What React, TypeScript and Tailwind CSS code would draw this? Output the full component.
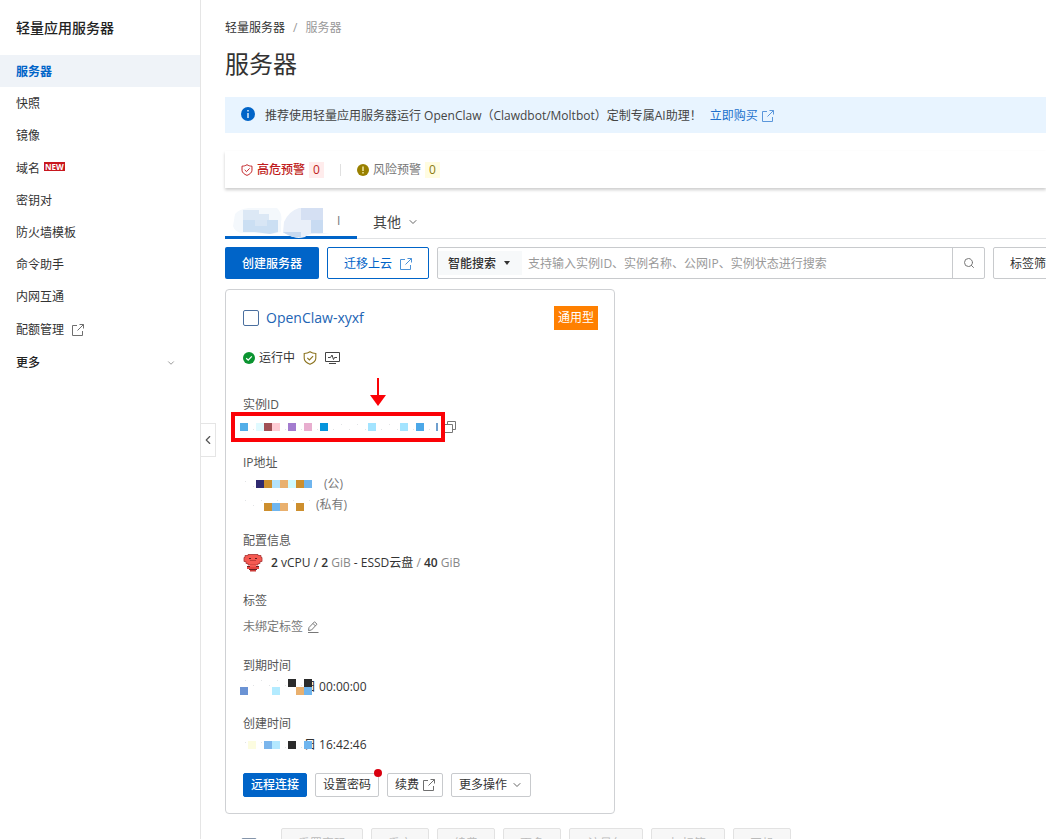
import type { ButtonHTMLAttributes, ReactNode } from "react"
import { ChevronDown, ChevronLeft, Search } from "lucide-react"

type Cell = { x: number; y?: number; w?: number; color: string }

const menu = ["快照", "镜像", "域名", "密钥对", "防火墙模板", "命令助手", "内网互通"]

const batchActions = ["重置密码", "重启", "续费", "更多", "流量包", "加标签", "开机"]

const idCells: Cell[] = [
  { x: 0, color: "#52aee8" },
  { x: 2, color: "#e0faff" },
  { x: 3, color: "#a05055" },
  { x: 4, color: "#ffccd4" },
  { x: 6, color: "#a37ccf" },
  { x: 8, color: "#e8aecf" },
  { x: 10, color: "#0695dc" },
  { x: 16, color: "#a3e4ff" },
  { x: 20, color: "#a3e4ff" },
  { x: 22, color: "#4ca8e8" },
  { x: 24.5, w: 2, color: "#6f9fce" },
]

const publicIpCells: Cell[] = [
  { x: 2, color: "#2f2a70" },
  { x: 3, color: "#cd8f2e" },
  { x: 4, color: "#b3e2fc" },
  { x: 5, color: "#e9b06e" },
  { x: 6, color: "#cffafe" },
  { x: 7, color: "#cd8f2e" },
  { x: 8, color: "#6fb5ee" },
]

const privateIpCells: Cell[] = [
  { x: 3, y: 0.5, color: "#cd8f2e" },
  { x: 4, y: 0.5, color: "#6fb5ee" },
  { x: 5, y: 0.5, color: "#e9b06e" },
  { x: 7, y: 0.5, color: "#cd8f2e" },
]

const expireCells: Cell[] = [
  { x: 6, color: "#2b2b2b" },
  { x: 8, color: "#2b2b2b" },
  { x: 0, y: 1, color: "#6b93d4" },
  { x: 4, y: 1, color: "#b3ebff" },
  { x: 7, y: 1, color: "#e9b06e" },
  { x: 8, y: 1, color: "#6fb5ee" },
]

const createCells: Cell[] = [
  { x: 1, color: "#fcfce0" },
  { x: 3, color: "#7ab5ec" },
  { x: 4, color: "#b3e8ff" },
  { x: 6, color: "#2b2b2b" },
  { x: 8, color: "#6fb5ee" },
]

// Masked value, drawn as a row of 8px blocks
function Mosaic({ cells, cols, rows = 1 }: { cells: Cell[]; cols: number; rows?: number }) {
  return (
    <svg width={cols * 8} height={rows * 8} className="relative -ml-[3px] shrink-0" aria-hidden="true">
      {Array.from({ length: cols }, (_, i) => (
        <rect key={i} x={i * 8 + 5} y={(i % 2) * 5 + 1} width="1" height="1" fill="#e2e4e6" />
      ))}
      {cells.map((c) => (
        <rect key={`${c.x}-${c.y ?? 0}`} x={c.x * 8} y={(c.y ?? 0) * 8} width={c.w ?? 8} height="8" fill={c.color} />
      ))}
    </svg>
  )
}

function ExternalIcon() {
  return (
    <svg width="12" height="12" viewBox="0 0 12 12" fill="none" stroke="currentColor" className="shrink-0 opacity-70">
      <path d="M5 1.5H.5v10h10V7M7.500.5h4v4M11.500.5l-6 6" />
    </svg>
  )
}

function ShieldIcon({ size }: { size: number }) {
  return (
    <svg width={size} height={size} viewBox="0 0 14 14" fill="none" stroke="currentColor" strokeWidth="1.1" className="shrink-0">
      <path d="M7 .8C5.300 2 3.400 2.500 1.200 2.500v4.800c0 2.700 2.600 4.700 5.800 6 3.200-1.300 5.800-3.300 5.800-6V2.500C10.600 2.500 8.700 2 7 .8Z" />
      <path d="m4.300 6.800 2.100 2.100 3.700-3.800" />
    </svg>
  )
}

function InfoIcon() {
  return (
    <svg width="14" height="14" viewBox="0 0 14 14" className="mb-1 shrink-0">
      <circle cx="7" cy="7" r="7" fill="#0064c8" />
      <path d="M7 6v5M7 3v1.500" stroke="#fff" strokeWidth="1.300" />
    </svg>
  )
}

function WarnIcon() {
  return (
    <svg width="12" height="12" viewBox="0 0 12 12" className="shrink-0">
      <circle cx="6" cy="6" r="6" fill="#998000" />
      <path d="M6 2.500v4.500M6 8v1.500" stroke="#fff8c0" strokeWidth="1.300" />
    </svg>
  )
}

function RunningIcon() {
  return (
    <svg width="12" height="12" viewBox="0 0 12 12" className="shrink-0">
      <circle cx="6" cy="6" r="6" fill="#0a9430" />
      <path d="m3.200 6.200 2 1.900 3.600-3.800" fill="none" stroke="#fff" strokeWidth="1.200" />
    </svg>
  )
}

function MonitorIcon() {
  return (
    <svg width="15" height="12" viewBox="0 0 15 12" fill="none" stroke="#444" className="shrink-0">
      <path d="M.5.5h14v9H.5zM4 11.500h7" />
      <path d="M3 5.500h2.500L7 3l1.500 4.500 1-2H12" />
    </svg>
  )
}

function CopyIcon() {
  return (
    <svg width="12" height="12" viewBox="0 0 12 12" fill="none" stroke="#777">
      <path d="M.5 3.500h8v8h-8zM3.500 3.500v-3h8v8h-3" />
    </svg>
  )
}

function EditIcon() {
  return (
    <svg width="12" height="12" viewBox="0 0 12 12" fill="none" stroke="#777">
      <path d="M1.500 9.500 2 6.500 7.500.8 10 3.200 4.500 9zM6 2.500l2.400 2.400M1 11.500h10.500" />
    </svg>
  )
}

function LobsterIcon() {
  return (
    <svg width="20" height="18" viewBox="0 0 20 18" className="shrink-0">
      <path d="M5 .5h10v1h3v2h1v4h-2v2h-2v1.500H5V9.500H3v-2H1v-4h1v-2h3z" fill="#f55a52" stroke="#a83432" strokeWidth="0.8" />
      <path d="M6 4h2v1H6zM12 4h2v1h-2z" fill="#5e1c1e" />
      <path d="M7 6.500h6" stroke="#c23c39" />
      <path d="M7 11h6v2H7z" fill="#f55a52" />
      <path d="M4 13h12v2H4z" fill="#e5443f" />
      <path d="M4 12.500h3M13 12.500h3" stroke="#6d2022" />
      <path d="M6 15.500h8" stroke="#6d2022" />
      <path d="M7 16h6v1.500H7z" fill="#c93a37" />
    </svg>
  )
}

function TabMosaic() {
  return (
    <svg width="98" height="30" viewBox="0 0 98 30" className="mt-1 shrink-0">
      <path d="M2 6Q6 1 16 0H44Q50 6 48 14V24L40 26 14 25Q2 26 0 18Z" fill="#f4f8fc" />
      <path d="M51 14Q56 3 66 0H90V25H97L86 26Q76 25 72 29Q62 32 56 26L50 25Z" fill="#e9eff9" />
      <path d="M10 2h16v10H10zM26 6h10v6H26z" fill="#dce8f5" />
      <path d="M10 12h35v12l-8 2-15-2H10z" fill="#cbdff3" />
      <path d="M22 12h12v6H22z" fill="#d8e6f5" />
      <path d="M68 0h22v12H68z" fill="#d5e0f3" />
      <path d="M78 12h12v13H78z" fill="#c8dbf2" />
      <path d="M50 24h18v5h-9l-6-3z" fill="#c8d9ef" />
    </svg>
  )
}

function SmallButton({ children, className = "", ...rest }: ButtonHTMLAttributes<HTMLButtonElement>) {
  return (
    <button
      type="button"
      className={`flex h-6 items-center gap-1 whitespace-nowrap rounded-xs border px-[7px] ${className}`}
      {...rest}
    >
      {children}
    </button>
  )
}

function Field({ label, className = "", children }: { label: string; className?: string; children: ReactNode }) {
  return (
    <div className={className}>
      <dt className="h-5 leading-5 text-[#555]">{label}</dt>
      {children}
    </div>
  )
}

function Sidebar() {
  return (
    <aside className="relative w-[201px] shrink-0 border-r border-[#e5e5e5] text-[#333]">
      <h2 className="flex h-[55px] items-center px-4 text-sm font-medium text-[#222]">轻量应用服务器</h2>
      <nav className="flex flex-col">
        <a href="#servers" className="flex h-8 items-center bg-[#eff3f8] px-4 pt-0.5 font-bold text-[#0064c8]">
          服务器
        </a>
        {menu.map((item) => (
          <a
            key={item}
            href={`#${item}`}
            className={`flex items-center gap-1 px-4 pt-0.5 ${item === "域名" ? "h-[33px]" : "h-8"}`}
          >
            {item}
            {item === "域名" && (
              <span className="mb-1 bg-[#c8171e] px-px text-[8px] leading-[9px] font-bold text-white">NEW</span>
            )}
          </a>
        ))}
        <a href="#quota" className="flex h-[33px] items-center gap-2 px-4 pt-0.5">
          配额管理
          <ExternalIcon />
        </a>
        <button type="button" className="mt-0.5 flex h-8 items-center justify-between pr-6 pl-4 font-medium text-[#222]">
          更多
          <ChevronDown className="size-2.5 text-[#888]" />
        </button>
      </nav>
      <button
        type="button"
        aria-label="收起"
        className="absolute top-[423px] left-[200px] z-10 flex h-[34px] w-4 items-center justify-center border border-[#e5e5e5] bg-white text-[#555]"
      >
        <ChevronLeft className="size-3.5 shrink-0" />
      </button>
    </aside>
  )
}

function AlertBar() {
  return (
    <div className="mt-[18px] flex h-[37px] items-center bg-white px-4 shadow-[0_2px_3px_rgba(0,0,0,0.2)]">
      <span className="flex items-center gap-1 text-[#c01c20]">
        <ShieldIcon size={12} />
        <span className="font-medium">高危预警</span>
        <span className="bg-[#ffecec] px-1 leading-4">0</span>
      </span>
      <span className="mx-4 h-3 w-px bg-[#e0e0e0]" />
      <span className="flex items-center gap-1 text-[#777]">
        <WarnIcon />
        <span>风险预警</span>
        <span className="bg-[#fffce0] px-1 leading-4 text-[#8a7a10]">0</span>
      </span>
    </div>
  )
}

function Toolbar() {
  return (
    <div className="mt-2 flex gap-2">
      <button type="button" className="h-8 shrink-0 rounded-xs bg-[#0064c8] px-[17px] pt-0.5 font-medium text-white">
        创建服务器
      </button>
      <button
        type="button"
        className="flex h-8 shrink-0 items-center gap-2 rounded-xs border border-[#0064c8] px-4 pt-0.5 text-[#0064c8]"
      >
        迁移上云
        <ExternalIcon />
      </button>
      <form className="flex h-8 w-[548px] shrink-0 items-center rounded-xs border border-[#c8cacd]">
        <div className="relative flex h-6 w-[84px] items-center bg-[#f7f9fa]">
          <select aria-label="搜索方式" className="w-full appearance-none pt-0.5 pl-2.5 font-medium text-[#333] outline-none">
            <option>智能搜索</option>
          </select>
          <span className="pointer-events-none absolute right-3 border-x-[3px] border-t-4 border-x-transparent border-t-[#333]" />
        </div>
        <input
          type="text"
          aria-label="搜索"
          placeholder="支持输入实例ID、实例名称、公网IP、实例状态进行搜索"
          className="min-w-0 flex-1 px-1.5 pt-0.5 outline-none placeholder:text-[#999]"
        />
        <button
          type="button"
          aria-label="搜索"
          className="flex h-full w-8 items-center justify-center border-l border-[#c8cacd] text-[#777]"
        >
          <Search className="size-3" />
        </button>
      </form>
      <button type="button" className="h-8 shrink-0 rounded-xs border border-[#c8cacd] px-4 pt-0.5 text-[#333]">
        标签筛选
      </button>
    </div>
  )
}

function ServerCard() {
  return (
    <article className="relative mt-2.5 w-[390px] rounded-sm border border-[#cfd1d4] px-[17px] pt-4 pb-4 text-[#333]">
      <div className="flex h-6 items-center">
        <input
          type="checkbox"
          id="server"
          className="size-4 appearance-none rounded-xs border border-[#4a6f9f] bg-white checked:bg-[#0064c8]"
        />
        <label htmlFor="server" className="ml-[7px] text-sm font-medium text-[#2264b4]">
          OpenClaw-xyxf
        </label>
        <span className="-mr-px ml-auto bg-[#ff8000] px-1 leading-6 text-white">通用型</span>
      </div>

      <div className="mt-[18px] flex h-5 items-center">
        <RunningIcon />
        <span className="mr-2 ml-1">运行中</span>
        <span className="mr-2 text-[#8c7420]">
          <ShieldIcon size={14} />
        </span>
        <MonitorIcon />
      </div>

      <dl className="mt-[27px]">
        <Field label="实例ID">
          <dd className="mt-0.5 flex h-5 items-center gap-1">
            <Mosaic cells={idCells} cols={25} />
            <CopyIcon />
          </dd>
        </Field>
        <Field label="IP地址" className="mt-4">
          <dd className="flex h-[21px] items-center gap-3 text-[#777]">
            <Mosaic cells={publicIpCells} cols={9} />
            (公)
          </dd>
          <dd className="flex h-[21px] items-center gap-1 text-[#777]">
            <Mosaic cells={privateIpCells} cols={9} rows={1.5} />
            (私有)
          </dd>
        </Field>
        <Field label="配置信息" className="mt-4">
          <dd className="mt-0.5 flex h-5 items-center gap-2 whitespace-pre">
            <LobsterIcon />
            <span>
              <b className="font-semibold">2</b> vCPU / <b className="font-semibold">2</b>{" "}
              <span className="text-[#888]">GiB</span> - ESSD云盘 <span className="text-[#888]">/</span>{" "}
              <b className="font-semibold">40</b> <span className="text-[#888]">GiB</span>
            </span>
          </dd>
        </Field>
        <Field label="标签" className="mt-[18px]">
          <dd className="mt-1.5 flex h-5 items-center gap-1 text-[#777]">
            未绑定标签
            <EditIcon />
          </dd>
        </Field>
        <Field label="到期时间" className="mt-[19px]">
          <dd className="mt-px flex h-5 items-center">
            <Mosaic cells={expireCells} cols={9} rows={2} />
            <span className="-ml-2">日 00:00:00</span>
          </dd>
        </Field>
        <Field label="创建时间" className="mt-[17px]">
          <dd className="mt-px flex h-5 items-center">
            <Mosaic cells={createCells} cols={9} />
            <span className="-ml-2">日 16:42:46</span>
          </dd>
        </Field>
      </dl>

      <div className="mt-[18px] flex gap-2">
        <SmallButton className="border-[#0064c8] bg-[#0064c8] font-medium text-white">远程连接</SmallButton>
        <SmallButton className="relative border-[#c8cacd]">
          设置密码
          <span className="absolute -top-[5px] -right-1 size-2 rounded-full bg-[#d9000f]" />
        </SmallButton>
        <SmallButton className="border-[#c8cacd]">
          续费
          <ExternalIcon />
        </SmallButton>
        <SmallButton className="border-[#c8cacd]">
          更多操作
          <ChevronDown className="size-3 text-[#666]" />
        </SmallButton>
      </div>

      {/* highlight around the instance id */}
      <div className="absolute top-[122px] left-[5px] h-[30px] w-[214px] border-4 border-[#fb0207]" />
      <svg width="16" height="28" viewBox="0 0 16 28" className="absolute top-[88px] left-36">
        <path d="M8 0v18" stroke="#fb0207" strokeWidth="2" />
        <path d="M0 17h16L8 28z" fill="#fb0207" />
      </svg>
    </article>
  )
}

export default function App() {
  return (
    <div className="flex h-screen overflow-hidden bg-white font-['Open_Sans','Noto_Sans_CJK_SC',sans-serif] text-xs">
      <Sidebar />
      <main className="min-w-0 flex-1 overflow-hidden pl-6">
        <div className="mt-[18px] flex h-5 items-center gap-2">
          <a href="#home" className="text-[#333]">
            轻量服务器
          </a>
          <span className="text-[#999]">/</span>
          <span className="text-[#999]">服务器</span>
        </div>
        <h1 className="mt-2.5 text-2xl leading-8 text-[#333]">服务器</h1>

        <div className="mt-[17px] flex h-9 items-center bg-[#e8f4ff] px-4 pt-0.5 text-[#444]">
          <InfoIcon />
          <p className="ml-2.5 whitespace-nowrap">
            推荐使用轻量应用服务器运行 OpenClaw（Clawdbot/Moltbot）定制专属AI助理！
          </p>
          <a href="#buy" className="ml-2 flex items-center gap-1 whitespace-nowrap text-[#2070cc]">
            立即购买
            <ExternalIcon />
          </a>
        </div>

        <AlertBar />

        <div className="mt-[17px] flex h-[34px] border-b border-[#e0e2e4] text-sm text-[#444]">
          <button
            type="button"
            className="-mb-px flex w-[132px] items-center gap-1.5 border-b-3 border-[#0064c8] pl-2 text-[#777]"
          >
            <TabMosaic />
            <span className="text-xs">I</span>
          </button>
          <button type="button" className="flex items-center gap-1.5 px-4">
            其他
            <ChevronDown className="size-3 text-[#666]" />
          </button>
        </div>

        <Toolbar />
        <ServerCard />

        <div className="mt-3.5 flex gap-2 pl-4">
          <input
            type="checkbox"
            aria-label="全选"
            className="mt-2.5 mr-4 size-4 appearance-none rounded-xs border border-[#8595aa] bg-[#c5d0e0]"
          />
          {batchActions.map((action) => (
            <button
              key={action}
              type="button"
              disabled
              className={`h-8 rounded-xs border border-[#e2e2e2] bg-[#f7f7f7] text-[#bbb] ${action.length === 3 ? "px-[18px]" : "px-4"}`}
            >
              {action}
            </button>
          ))}
        </div>
      </main>
    </div>
  )
}
